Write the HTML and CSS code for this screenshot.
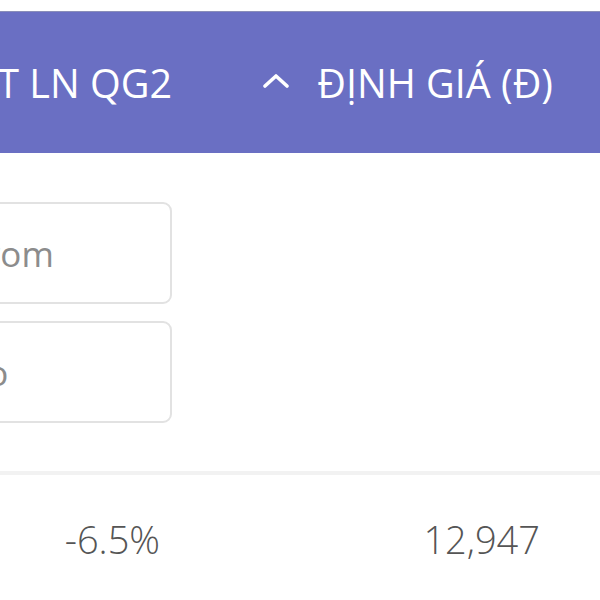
FILE: index.html
```html
<!DOCTYPE html>
<html lang="vi">
<head>
<meta charset="utf-8">
<link rel="stylesheet" href="styles.css">
</head>
<body>
<div class="viewport">
  <div class="table">
    <div class="row head">
      <div class="cell c1">TT LN QG2</div>
      <div class="cell c2">
        <svg class="chev" width="26" height="14" viewBox="0 0 26 14"><polyline points="2,12 13,2 24,12" fill="none" stroke="#fff" stroke-width="3.6" stroke-linecap="round" stroke-linejoin="round"/></svg>
        <span class="title">ĐỊNH GIÁ (Đ)</span>
      </div>
    </div>
    <div class="row filter">
      <div class="cell c1">
        <div class="inputs">
          <input class="box" type="text" placeholder="From">
          <input class="box" type="text" placeholder="To">
        </div>
      </div>
      <div class="cell c2"></div>
    </div>
    <div class="row data">
      <div class="cell c1">-6.5%</div>
      <div class="cell c2">12,947</div>
    </div>
  </div>
</div>
</body>
</html>
```

FILE: styles.css
```css
html, body {
  margin: 0;
  padding: 0;
  background: #fff;
}
.viewport {
  width: 600px;
  height: 600px;
  overflow: hidden;
  padding-top: 11px;
  box-sizing: border-box;
}
.table {
  margin-left: -260px;
  width: 860px;
  font-family: "Open Sans", "Noto Sans", sans-serif;
  font-size: 38px;
}
.row {
  display: grid;
  grid-template-columns: 480px 380px;
}
.cell {
  display: flex;
  align-items: center;
  justify-content: flex-end;
  box-sizing: border-box;
}
.head {
  background: #6a6fc3;
  color: #fff;
  height: 141px;
  border-top: 1px solid #8a8eb8;
  font-size: 39.5px;
}
.head .c1 { padding-right: 48px; }
.head .c2 { padding-right: 47px; gap: 28px; }
.chev { display: block; margin-top: -4px; }
.filter {
  padding: 49px 0 48px;
  border-bottom: 4px solid #f2f2f2;
}
.filter .c1 { padding-right: 48px; }
.inputs {
  display: flex;
  flex-direction: column;
  gap: 17px;
}
.box {
  width: 236px;
  height: 102px;
  box-sizing: border-box;
  border: 2px solid #e2e2e2;
  border-radius: 9px;
  padding: 0 0 0 30px;
  font-family: "Open Sans", "Noto Sans", sans-serif;
  font-size: 35px;
  color: #555;
  background: #fff;
  outline: none;
}
.box::placeholder { color: #8c8c8c; }
.data {
  height: 130px;
  color: #555;
  font-size: 38px;
  font-weight: 350;
}
.data .c1, .data .c2 { padding-right: 60px; padding-bottom: 2px; }
```
